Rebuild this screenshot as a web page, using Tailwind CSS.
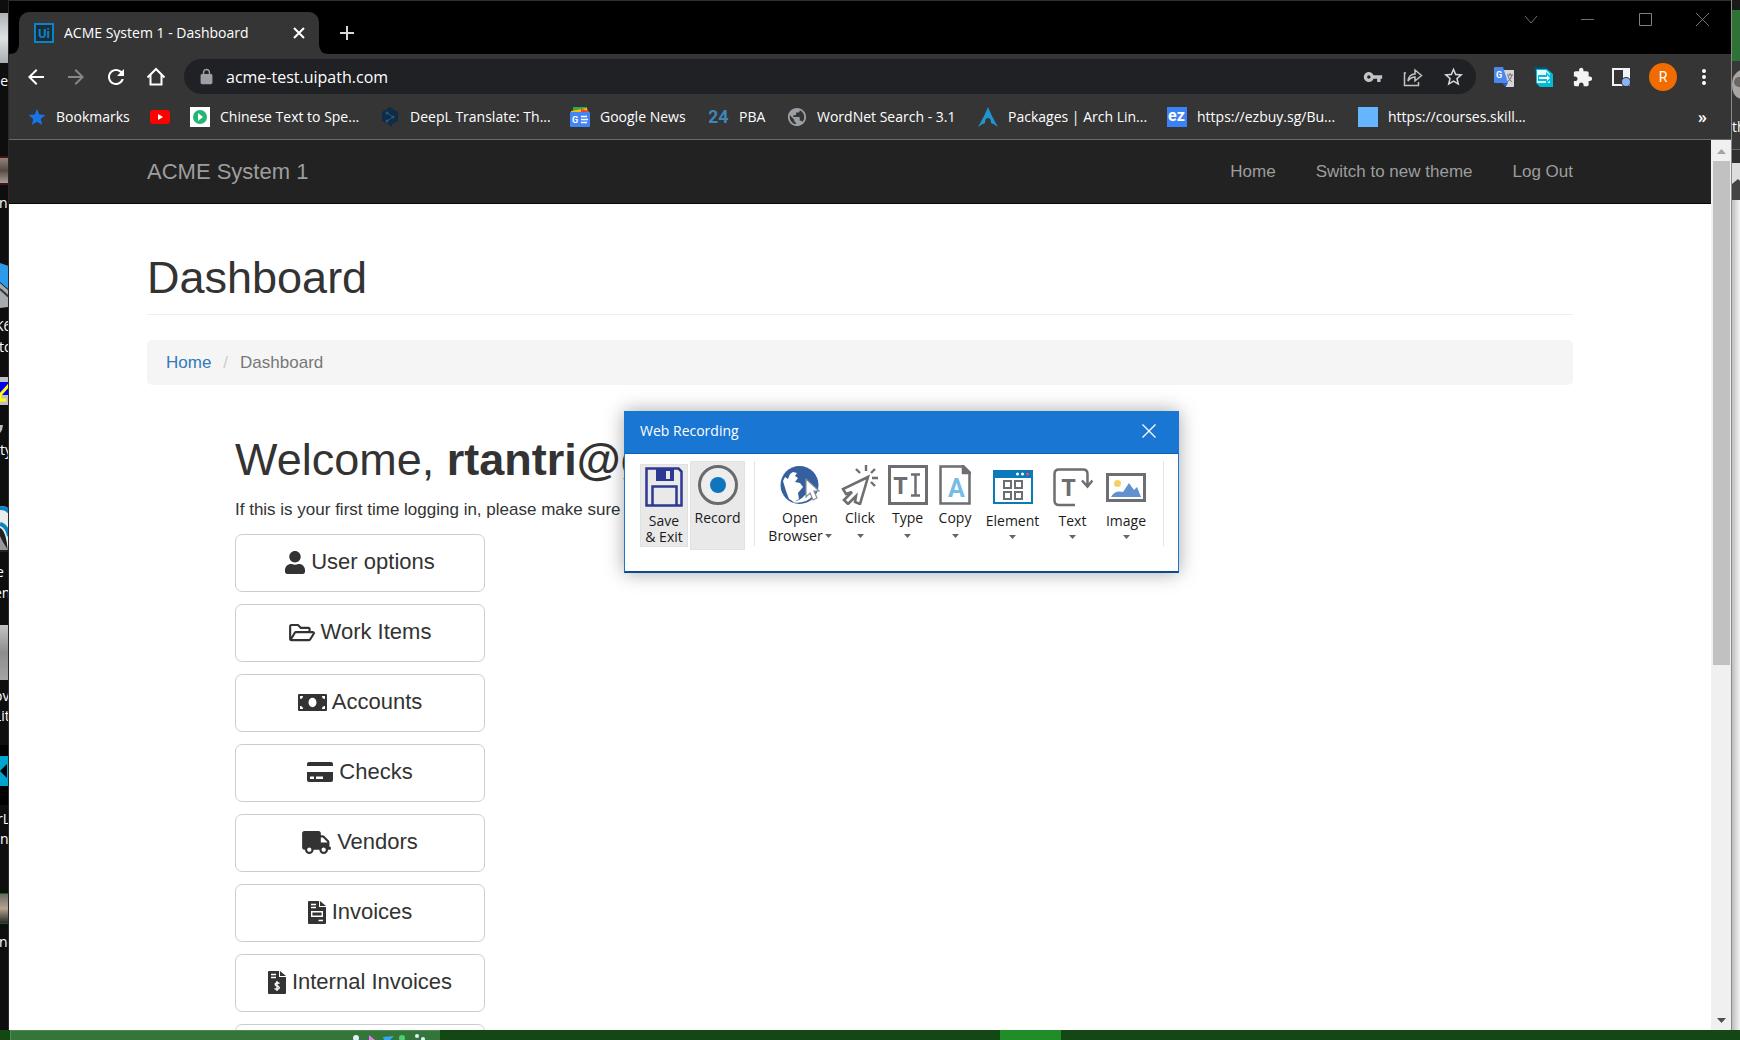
<!DOCTYPE html>
<html lang="en">
<head>
<meta charset="utf-8">
<title>ACME System 1 - Dashboard</title>
<script src="https://cdn.jsdelivr.net/npm/@tailwindcss/browser@4"></script>
</head>
<body class="relative flex h-screen flex-col overflow-hidden bg-[#0e0e0e] font-['Segoe_UI','Open_Sans','Noto_Sans',sans-serif]">

<div class="flex min-h-0 flex-1">

  <!-- desktop, left edge -->
  <aside class="relative w-[9px] shrink-0 overflow-hidden border-r border-[#2a2a2a] bg-[#0e0e0e] text-sm leading-5 whitespace-nowrap text-white">
    <div class="absolute top-[13px] left-0 h-[50px] w-[9px] bg-linear-to-b from-[#aeb2b4] via-[#dfe2e3] to-[#a9adb0]"></div>
    <span class="absolute top-[71px] right-0">e</span>
    <div class="absolute top-[156px] left-0 h-[29px] w-[9px] border-y-2 border-[#4a1212] bg-linear-to-b from-[#8b857c] via-[#5b4a44] to-[#a7a09a]"></div>
    <span class="absolute top-[193px] left-[-1px]">ne</span>
    <svg class="absolute top-[263px] left-0" width="9" height="46"><path d="M0 0l9 3v24L0 19z" fill="#2b9bea"/><path d="M0 20l9 8v16l-9 1z" fill="#a6abb0"/><path d="M0 26l9 8" stroke="#333" stroke-width="2"/></svg>
    <span class="absolute top-[316px] left-[-5px]">K6</span>
    <span class="absolute top-[337px] left-[-1px]">to</span>
    <svg class="absolute top-[377px] left-0" width="9" height="28"><path d="M0 0h9v28H0z" fill="#c0c0c0"/><path d="M0 5h9v13H0z" fill="#0000f0"/><path d="M9 8L0 18v5h6" stroke="#ff0" stroke-width="3" fill="none"/></svg>
    <svg class="absolute top-[425px] left-0" width="9" height="9"><path d="M0 0h3l-1 5-2 3z" fill="#bbb"/></svg>
    <span class="absolute top-[440px] left-[-5px]">tty</span>
    <svg class="absolute top-[506px] left-0" width="9" height="46"><path d="M0 0q8 0 9 4v40H0z" fill="#ececec"/><path d="M0 2q7 0 9 4M0 18q7 2 9 12" stroke="#0a84c4" stroke-width="4" fill="none"/><path d="M0 22q6 2 8 24H0z" fill="#222"/><path d="M0 30l3 6 5 8H0z" fill="#999"/></svg>
    <span class="absolute top-[562px] left-[-4px]">e S</span>
    <span class="absolute top-[583px] left-[-6px]">en</span>
    <div class="absolute top-[625px] left-0 h-[55px] w-[9px] bg-linear-to-b from-[#c4c4c4] via-[#8d8d8d] to-[#a5a5a5]"></div>
    <span class="absolute top-[686px] left-[-6px]">ov</span>
    <span class="absolute top-[706px] left-[-6px]">Lit</span>
    <svg class="absolute top-[745px] left-0" width="9" height="60"><path d="M0 0h9v60H0z" fill="#000"/><path d="M0 11h9v30H0zM0 37h9v2H0z" fill="#00a5cf"/><path d="M7 19v14l-7-7z" fill="#000"/></svg>
    <span class="absolute top-[809px] left-[-3px]">rL</span>
    <span class="absolute top-[829px] left-0">n</span>
    <div class="absolute top-[893px] left-0 h-[31px] w-[9px] border-y border-[#1b5a1f] bg-linear-to-b from-[#6d6a66] via-[#b5a48f] to-[#2b2b2b]"></div>
    <span class="absolute top-[932px] left-[-1px]">ne</span>
  </aside>

  <!-- browser window -->
  <div class="flex min-w-0 flex-1 flex-col">

    <header class="shrink-0 border-b border-[#6a6a6a] bg-[#353535] text-sm text-white">
      <!-- tab strip -->
      <div class="flex h-[54px] items-end border-t border-[#2e2e2e] bg-black">
        <svg width="10" height="10" class="shrink-0"><path d="M10 0v10H0q10 0 10-10z" fill="#353535"/></svg>
        <div class="flex h-[42px] w-[300px] items-center rounded-t-[10px] bg-[#353535] pl-[15px] pr-3">
          <svg width="20" height="20"><rect x="1" y="1" width="18" height="18" fill="#1c2b36" stroke="#0a84c4" stroke-width="2"/><text x="4" y="15" font-family="Roboto" font-size="13" font-weight="700" fill="#0a84c4">Ui</text></svg>
          <span class="ml-[10px] flex-1 whitespace-nowrap">ACME System 1 - Dashboard</span>
          <button aria-label="Close tab"><svg width="16" height="16"><path d="M3 3l10 10M13 3L3 13" stroke="#fff" stroke-width="2"/></svg></button>
        </div>
        <svg width="10" height="10" class="shrink-0"><path d="M0 0v10h10Q0 10 0 0z" fill="#353535"/></svg>
        <button aria-label="New tab" class="mb-[11px] ml-2"><svg width="20" height="20"><path d="M10 3v14M3 10h14" stroke="#d8d8d8" stroke-width="2"/></svg></button>
        <div class="ml-auto flex gap-[37px] self-start pt-[8px] pr-[19px]">
          <button aria-label="Tab search"><svg width="20" height="20" fill="none" stroke="#707070"><path d="M4 7l6 7 6-7"/></svg></button>
          <button aria-label="Minimize"><svg width="20" height="20" fill="none" stroke="#707070"><path d="M3 10.500h13"/></svg></button>
          <button aria-label="Maximize"><svg width="20" height="20" fill="none" stroke="#808080"><path d="M4.500 4.500h12v12h-12z"/></svg></button>
          <button aria-label="Close window"><svg width="20" height="20" fill="none" stroke="#707070"><path d="M4 4l13 13M17 4L4 17"/></svg></button>
        </div>
      </div>

      <!-- toolbar -->
      <div class="flex h-[45px] items-center pl-[15px]">
        <nav class="flex gap-4">
          <button aria-label="Back"><svg width="24" height="24" viewBox="0 0 24 24" fill="#fff"><path d="M20 11H7.830l5.590-5.590L12 4l-8 8 8 8 1.410-1.410L7.830 13H20v-2z"/></svg></button>
          <button aria-label="Forward"><svg width="24" height="24" viewBox="0 0 24 24" fill="#868686"><path d="M4 11h12.170l-5.590-5.590L12 4l8 8-8 8-1.410-1.410L16.170 13H4v-2z"/></svg></button>
          <button aria-label="Reload"><svg width="24" height="24" viewBox="0 0 24 24" fill="#fff"><path d="M17.650 6.350C16.200 4.900 14.210 4 12 4c-4.420 0-7.990 3.580-7.990 8s3.570 8 7.990 8c3.730 0 6.840-2.550 7.730-6h-2.080c-.82 2.330-3.040 4-5.650 4-3.310 0-6-2.690-6-6s2.690-6 6-6c1.660 0 3.140.69 4.220 1.780L13 11h7V4l-2.350 2.350z"/></svg></button>
          <button aria-label="Home page"><svg width="24" height="24" viewBox="0 0 24 24" fill="none" stroke="#fff" stroke-width="2"><path d="M6.500 10v9.500h11V10M3.500 12.500L12 4l8.500 8.500"/></svg></button>
        </nav>
        <div class="ml-4 flex h-[35px] flex-1 items-center rounded-full bg-[#202124] pl-[15px] pr-3">
          <svg width="15" height="17" viewBox="3 0 18 23" fill="#9aa0a6"><path d="M18 8h-1V6c0-2.760-2.240-5-5-5S7 3.240 7 6v2H6c-1.100 0-2 .9-2 2v10c0 1.100.9 2 2 2h12c1.100 0 2-.9 2-2V10c0-1.100-.9-2-2-2zM9 6c0-1.660 1.340-3 3-3s3 1.340 3 3v2H9V6z"/></svg>
          <input aria-label="Address" value="acme-test.uipath.com" class="ml-3 min-w-0 flex-1 bg-transparent text-base text-white outline-none">
          <div class="flex gap-5">
            <button aria-label="Passwords"><svg width="20" height="20" viewBox="0 0 24 24" fill="#c4c4c4"><path d="M12.650 10C11.830 7.670 9.610 6 7 6c-3.310 0-6 2.690-6 6s2.690 6 6 6c2.610 0 4.830-1.670 5.650-4H17v4h4v-4h2v-4H12.650zM7 14c-1.100 0-2-.9-2-2s.9-2 2-2 2 .9 2 2-.9 2-2 2z"/></svg></button>
            <button aria-label="Share"><svg width="20" height="20" fill="none" stroke="#c4c4c4" stroke-width="1.500"><path d="M3 6H1.500v12.500h14V15"/><path d="M5 14q1-7 7-7V3l6.500 5.500L12 14v-4q-4 0-7 4z"/></svg></button>
            <button aria-label="Bookmark this page"><svg width="21" height="21" viewBox="1 1 22 21" fill="#d8d8d8"><path d="M22 9.240l-7.190-.62L12 2 9.190 8.630 2 9.240l5.460 4.730L5.820 21 12 17.270 18.180 21l-1.630-7.030L22 9.240zM12 15.400l-3.760 2.270 1-4.280-3.320-2.880 4.380-.38L12 6.100l1.710 4.040 4.380.38-3.320 2.880 1 4.280L12 15.400z"/></svg></button>
          </div>
        </div>
        <div class="flex items-center gap-[18px] pr-[17px] pl-[17px]">
          <button aria-label="Translate"><svg width="22" height="22"><path d="M10 4h11v16q0 1-1 1h-7z" fill="#d4d6d9"/><path d="M1 2q0-1 1-1h8l5 16H2q-1 0-1-1z" fill="#4a88ee"/><path d="M9 17h6l-2.500 4z" fill="#2f56c8"/><text x="3" y="12" font-family="Roboto" font-size="9" font-weight="700" fill="#fff">G</text><path d="M14 9h6M17 7v2M19 9q-1 5-5 7M15 10q1 4 4 6" stroke="#6d7378" fill="none"/></svg></button>
          <button aria-label="Screen sharing extension"><svg width="22" height="22"><path d="M1 1h12l2 2v12H4z" fill="#075177"/><path d="M3 3h11l6 5v13H7l-4-4z" fill="#00bcd9"/><path d="M4 4h9l4 4v9H4z" fill="#e6fafc"/><path d="M5 9h8V6l7 6-7 6v-3H5z" fill="#00bcd9"/><path d="M6 11h8V9l3 3-3 3v-2H6z" fill="#fff"/></svg></button>
          <button aria-label="Extensions"><svg width="20" height="20" viewBox="1 0 23 23" fill="#f3f3f3"><path d="M20.500 11H19V7c0-1.100-.9-2-2-2h-4V3.500C13 2.120 11.880 1 10.500 1S8 2.120 8 3.500V5H4c-1.100 0-1.990.9-1.990 2v3.800H3.500c1.490 0 2.700 1.210 2.700 2.700s-1.210 2.700-2.700 2.700H2V20c0 1.100.9 2 2 2h3.800v-1.500c0-1.490 1.210-2.700 2.700-2.700 1.490 0 2.700 1.210 2.700 2.700V22H17c1.100 0 2-.9 2-2v-4h1.500c1.380 0 2.500-1.120 2.500-2.500S21.880 11 20.500 11z"/></svg></button>
          <button aria-label="Side panel"><svg width="20" height="20"><path d="M2 2h16v16H2z" fill="none" stroke="#f3f3f3" stroke-width="2"/><path d="M12 2h6v9h-6z" fill="#f3f3f3"/><circle cx="15" cy="15" r="5" fill="#353535"/><circle cx="15" cy="15" r="4" fill="#8ab4f8"/></svg></button>
          <button aria-label="Profile" class="-mr-px flex size-7 items-center justify-center rounded-full bg-[#f06c00] font-['Roboto',sans-serif] text-sm">R</button>
          <button aria-label="Menu"><svg width="20" height="20" fill="#fff"><circle cx="10" cy="4" r="2"/><circle cx="10" cy="10" r="2"/><circle cx="10" cy="16" r="2"/></svg></button>
        </div>
      </div>

      <!-- bookmarks bar -->
      <nav class="flex h-[40px] items-center pb-1 pl-[18px] whitespace-nowrap">
        <a href="#" class="flex w-[123px] shrink-0 items-center gap-[9px]"><svg width="20" height="20" viewBox="0 0 24 23" fill="#1a73e8"><path d="M22 9.240l-7.190-.62L12 2 9.190 8.630 2 9.240l5.460 4.730L5.820 21 12 17.270 18.180 21l-1.630-7.030z"/></svg>Bookmarks</a>
        <a href="#" aria-label="YouTube" class="flex w-[40px] shrink-0 items-center"><svg width="20" height="20"><rect y="3" width="20" height="14" rx="3" fill="#f00"/><path d="M8 7v6l5-3z" fill="#fff"/></svg></a>
        <a href="#" class="flex w-[190px] shrink-0 items-center gap-[10px]"><svg width="20" height="20"><path d="M0 0h20v20H0z" fill="#fff"/><circle cx="10" cy="10" r="7" fill="#22b573"/><path d="M8 6v8l5-4z" fill="#fff"/></svg>Chinese Text to Spe...</a>
        <a href="#" class="flex w-[190px] shrink-0 items-center gap-[10px]"><svg width="20" height="20"><path d="M10 0l8 5v9l-6 3v3l-4-3-6-3V5z" fill="#0f2b46"/><path d="M7 6l6 4-6 4" fill="none" stroke="#2d5779" stroke-width="1"/><circle cx="7" cy="6" r="1.500" fill="#2d5779"/><circle cx="13" cy="10" r="1.500" fill="#2d5779"/><circle cx="7" cy="14" r="1.500" fill="#2d5779"/></svg>DeepL Translate: Th...</a>
        <a href="#" class="flex w-[139px] shrink-0 items-center gap-[10px]"><svg width="20" height="20"><path d="M3 0h14v5H3z" fill="#34a853"/><path d="M1 4l16-3 1 5H1z" fill="#fbbc04"/><path d="M11 2l8 2v3h-8z" fill="#ea4335"/><rect y="5" width="20" height="15" rx="1" fill="#4285f4"/><text x="2" y="16" font-family="Roboto" font-size="9" font-weight="700" fill="#fff">G</text><path d="M11 9.500h6M11 12.500h7M11 15.500h6" stroke="#fff" stroke-width="1.500"/></svg>Google News</a>
        <a href="#" class="flex w-[78px] shrink-0 items-center gap-[10px]"><svg width="20" height="20"><text x="-1" y="16" font-family="Roboto" font-size="18" font-weight="700" fill="#3e86b8">24</text></svg>PBA</a>
        <a href="#" class="flex w-[191px] shrink-0 items-center gap-[10px]"><svg width="20" height="20" viewBox="1 1 22 22" fill="#9aa0a6"><path d="M12 2C6.480 2 2 6.480 2 12s4.480 10 10 10 10-4.480 10-10S17.520 2 12 2zm-1 17.930c-3.950-.49-7-3.850-7-7.930 0-.62.08-1.210.21-1.790L9 15v1c0 1.100.9 2 2 2v1.930zm6.900-2.540c-.26-.81-1-1.390-1.900-1.390h-1v-3c0-.55-.45-1-1-1H8v-2h2c.55 0 1-.45 1-1V7h2c1.100 0 2-.9 2-2v-.41c2.930 1.190 5 4.060 5 7.410 0 2.080-.8 3.970-2.100 5.390z"/></svg>WordNet Search - 3.1</a>
        <a href="#" class="flex w-[189px] shrink-0 items-center gap-[10px]"><svg width="20" height="20"><path d="M10 0q3 8 10 20-4-3-7-4 0-5-3-5t-3 5q-3 1-7 4Q7 8 10 0z" fill="#1e96d2"/></svg>Packages | Arch Lin...</a>
        <a href="#" class="flex w-[191px] shrink-0 items-center gap-[10px]"><svg width="20" height="20"><path d="M0 0h20v20H0z" fill="#3b82f6"/><text x="1" y="14" font-family="Roboto" font-size="16" font-weight="700" fill="#fff">ez</text></svg>https://ezbuy.sg/Bu...</a>
        <a href="#" class="flex shrink-0 items-center gap-[10px]"><span class="size-5 bg-[#66b5ff]"></span>https://courses.skill...</a>
        <button aria-label="More bookmarks" class="mr-[24px] ml-auto text-base leading-none font-semibold">»</button>
      </nav>
    </header>

    <div class="flex min-h-0 flex-1 font-['Arial','Liberation_Sans',sans-serif] text-[17px] leading-[25px] text-[#333]">
      <!-- page -->
      <main class="min-w-0 flex-1 overflow-hidden bg-white">
        <nav class="flex h-[64px] items-center justify-between border-b border-[#080808] bg-[#222] px-[138px] pb-px text-[#9d9d9d]">
          <a href="#" class="text-[22px]">ACME System 1</a>
          <div class="flex gap-10">
            <a href="#">Home</a>
            <a href="#">Switch to new theme</a>
            <a href="#">Log Out</a>
          </div>
        </nav>
        <div class="px-[138px] pt-[49px]">
          <h1 class="border-b border-[#eee] pb-[11px] text-[45px] leading-[50px]">Dashboard</h1>
          <ol class="mt-[25px] flex h-[45px] items-center rounded-[5px] bg-[#f5f5f5] px-[19px] text-[#777]">
            <li><a href="#" class="text-[#337ab7]">Home</a></li>
            <li class="px-3 text-[#ccc]" aria-hidden="true">/</li>
            <li>Dashboard</li>
          </ol>
          <section class="pt-[50px] pl-[88px]">
            <h2 class="text-[45px] leading-[50px] whitespace-nowrap">Welcome, <strong>rtantri@gmail.com</strong></h2>
            <p class="mt-3 whitespace-nowrap">If this is your first time logging in, please make sure</p>
            <div class="mt-3 flex w-[250px] flex-col gap-3 text-[22px] leading-[30px]">
              <button class="flex h-[58px] shrink-0 items-center justify-center gap-[6px] rounded-[7px] border border-[#ccc] pb-[2px]"><svg width="20" height="23" viewBox="0 0 448 512" fill="#333"><path d="M224 256c70.700 0 128-57.300 128-128S294.700 0 224 0 96 57.300 96 128s57.300 128 128 128zm89.600 32h-16.700c-22.200 10.200-46.900 16-72.900 16s-50.600-5.800-72.900-16h-16.700C60.200 288 0 348.200 0 422.400V464c0 26.500 21.500 48 48 48h352c26.500 0 48-21.500 48-48v-41.600c0-74.200-60.200-134.400-134.400-134.400z"/></svg>User options</button>
              <button class="flex h-[58px] shrink-0 items-center justify-center gap-[6px] rounded-[7px] border border-[#ccc] pb-[2px]"><svg width="26" height="23" viewBox="0 0 576 512" fill="#333"><path d="M527.900 224H480v-48c0-26.500-21.500-48-48-48H272l-64-64H48C21.500 64 0 85.500 0 112v288c0 26.500 21.500 48 48 48h400c16.500 0 31.900-8.500 40.700-22.600l79.900-128c20-31.900-3-73.400-40.700-73.400zM48 118c0-3.300 2.700-6 6-6h134.100l64 64H426c3.300 0 6 2.700 6 6v42H152c-16.800 0-32.400 8.800-41.100 23.200L48 351.400zm400 282H72l77.200-128H528z"/></svg>Work Items</button>
              <button class="flex h-[58px] shrink-0 items-center justify-center gap-[5px] rounded-[7px] border border-[#ccc] pb-[2px]"><svg width="29" height="23" viewBox="0 0 29 23"><rect y="3" width="29" height="17" rx="1" fill="#333"/><ellipse cx="14.500" cy="11.500" rx="4" ry="4.700" fill="#fff"/><path d="M2 8V5h3q0 3-3 3zM27 8V5h-3q0 3 3 3zM2 15v3h3q0-3-3-3zM27 15v3h-3q0-3 3-3z" fill="#fff"/></svg>Accounts</button>
              <button class="flex h-[58px] shrink-0 items-center justify-center gap-[6px] rounded-[7px] border border-[#ccc] pb-[2px]"><svg width="26" height="23" viewBox="0 0 26 23" fill="#333"><path d="M0 5V3q0-2 2-2h22q2 0 2 2v2zM0 11h26v8q0 2-2 2H2q-2 0-2-2z"/><path d="M3 15.500h4v2.500H3zM9 15.500h7v2.500H9z" fill="#fff"/></svg>Checks</button>
              <button class="flex h-[58px] shrink-0 items-center justify-center gap-[6px] rounded-[7px] border border-[#ccc] pb-[2px]"><svg width="29" height="23" viewBox="0 0 640 512" fill="#333"><path d="M624 352h-16V243.900c0-12.700-5.100-24.900-14.100-33.900L494 110.100c-9-9-21.200-14.100-33.900-14.100H416V48c0-26.500-21.500-48-48-48H48C21.500 0 0 21.500 0 48v320c0 26.500 21.500 48 48 48h16c0 53 43 96 96 96s96-43 96-96h128c0 53 43 96 96 96s96-43 96-96h48c8.800 0 16-7.200 16-16v-32c0-8.800-7.200-16-16-16zM160 464c-26.500 0-48-21.500-48-48s21.500-48 48-48 48 21.500 48 48-21.500 48-48 48zm320 0c-26.500 0-48-21.500-48-48s21.500-48 48-48 48 21.500 48 48-21.500 48-48 48zm80-208H416V144h44.100l99.900 99.900V256z"/></svg>Vendors</button>
              <button class="flex h-[58px] shrink-0 items-center justify-center gap-[6px] rounded-[7px] border border-[#ccc] pb-[2px]"><svg width="18" height="23" viewBox="0 0 18 23" fill="#333"><path d="M1 0h10v6h7v16q0 1-1 1H1q-1 0-1-1V1q0-1 1-1zM12 0l6 5h-6z"/><path d="M3 3.500h5M3 6.500h5M10.500 19.500h4.500" stroke="#fff" stroke-width="1.300"/><path d="M3.700 10.700h10.600v4.600H3.700z" fill="#333" stroke="#fff" stroke-width="1.400"/></svg>Invoices</button>
              <button class="flex h-[58px] shrink-0 items-center justify-center gap-[6px] rounded-[7px] border border-[#ccc] pb-[2px]"><svg width="18" height="23" viewBox="0 0 18 23" fill="#333"><path d="M1 0h10v6h7v16q0 1-1 1H1q-1 0-1-1V1q0-1 1-1zM12 0l6 5h-6z"/><path d="M3 3.500h5M3 6.500h5" stroke="#fff" stroke-width="1.300"/><path d="M11.500 12.500q-2-1.500-4 0-1 1.500 1.500 2.500 3 1 2 2.500-2 1.500-4.500 0M9 10v10" stroke="#fff" stroke-width="1.400" fill="none"/></svg>Internal Invoices</button>
              <button class="h-[58px] shrink-0 rounded-[7px] border border-[#ccc]" aria-label="Search"></button>
            </div>
          </section>
        </div>
      </main>
      <!-- scrollbar -->
      <div class="flex w-5 shrink-0 flex-col items-center bg-[#f0f0f0]">
        <svg width="20" height="21" fill="#a3a3a3"><path d="M6 14h9l-4.500-5z"/></svg>
        <div class="ml-px h-[504px] w-[17px] bg-[#c1c1c1]"></div>
        <svg width="20" height="20" class="mt-auto" fill="#505050"><path d="M6 8h9l-4.500 5z"/></svg>
      </div>
    </div>
  </div>

  <!-- window behind, right edge -->
  <aside class="relative flex w-[9px] shrink-0 flex-col overflow-hidden border-l border-[#8a8a8a] bg-white text-sm text-white">
    <div class="h-[10px] bg-[#1a1a1a]"></div>
    <div class="h-[51px] bg-[#2e7235]"></div>
    <div class="h-[88px] bg-[#383838]"><svg width="9" height="56"><path d="M9 9Q0 12 0 24t9 14z" fill="#a8a5a2"/><circle cx="7" cy="21" r="5" fill="#6a6765"/></svg><span class="block leading-5">th</span></div>
    <div class="h-[14px] border-t border-[#666] bg-[#303030]"></div>
    <div class="h-[37px] bg-[#ddd]"><svg width="9" height="37"><path d="M0 21l6-5 3 3v18H0z" fill="#444"/></svg></div>
    <div class="flex-1 bg-linear-to-r from-[#bdbdbd] to-[#f4f4f4]"></div>
  </aside>
</div>

<!-- taskbar -->
<footer class="flex h-[10px] shrink-0 overflow-hidden bg-[#134815]">
  <div class="ml-[10px] w-[430px] border-t border-l border-[#4f8a53] bg-[#347639]">
    <svg width="430" height="9"><circle cx="345" cy="7" r="3" fill="#dfefff"/><path d="M358 4l6 5h-6z" fill="#e67af0"/><path d="M372 6l11-1-4 4h-6z" fill="#34a8f5"/><circle cx="391" cy="7" r="3" fill="#48d070"/><circle cx="406" cy="5" r="2" fill="#dfefff"/><circle cx="412" cy="8" r="2" fill="#dfefff"/></svg>
  </div>
  <div class="ml-[560px] w-[61px] bg-[#208d28]"></div>
</footer>

<!-- floating recorder window -->
<section aria-label="Web Recording" class="absolute top-[411px] left-[624px] flex h-[162px] w-[555px] flex-col border border-b-2 border-[#1976d2] border-b-[#0c4b8c] bg-white text-sm text-[#1a1a1a] shadow-[0_0_18px_rgba(0,0,0,0.35)]">
  <header class="flex h-[42px] shrink-0 items-center justify-between border-b border-[#0f5fb3] bg-[#1976d2] pr-[21px] pb-[3px] pl-[15px] text-white">
    <h2>Web Recording</h2>
    <button aria-label="Close recorder"><svg width="16" height="16"><path d="M1.500 1.500l13 13M14.500 1.500l-13 13" stroke="#fff" stroke-width="1.300"/></svg></button>
  </header>
  <div class="flex items-start pt-[7px] pl-[15px] leading-[18px]">
    <button class="mt-[3px] flex h-[83px] w-12 shrink-0 flex-col items-center border border-[#e0e0e0] bg-[#e9e9e9] pt-[2px] leading-4">
      <svg width="38" height="40" fill="none" stroke="#2b3990" stroke-width="2.500"><path d="M1.500 1.500h32l3 3v34h-35z"/><path d="M7.500 38V19.500h24V38" /><path d="M11 1h18v13H11z" fill="#2b3990" stroke="none"/><path d="M21 4h4v8h-4z" fill="#e9e9e9" stroke="none"/></svg>
      <span class="mt-[6px]">Save<br><span class="whitespace-nowrap">&amp; Exit</span></span>
    </button>
    <button class="ml-[2px] flex h-[89px] w-[55px] shrink-0 flex-col items-center border border-[#e2e2e2] bg-[#e9e9e9] pt-[3px]">
      <svg width="40" height="40"><circle cx="20" cy="20" r="18.500" fill="#ededed" stroke="#696a6c" stroke-width="3"/><circle cx="20" cy="20" r="8" fill="#0f75bd"/></svg>
      <span class="mt-1">Record</span>
    </button>
    <div class="ml-[9px] h-[85px] w-px bg-[#e4e4e4]"></div>
    <button class="ml-[11px] flex w-[68px] shrink-0 flex-col items-center pt-1">
      <svg width="40" height="40"><circle cx="19.500" cy="20" r="19" fill="#355f9e"/><path d="M3 16l2-4 3 2 2-5 3-2 4 1-2 3 3 2-3 4 5 1 3 4-5 6 1 6-5 3-5-3-3-8zM25 30q6-2 11-5-2 7-10 11-8 3-14 1 8-1 13-7z" fill="#fff"/><path d="M26 14v18l4-4 3 7 4-2-3-7h5z" fill="#fff" stroke="#8b8d90" stroke-width="1.200"/></svg>
      <span class="mt-1">Open</span>
      <span class="flex items-center gap-0.5">Browser<svg width="7" height="4" fill="#666"><path d="M0 0h7L3.500 4z"/></svg></span>
    </button>
    <button class="flex w-[52px] shrink-0 flex-col items-center pt-1">
      <svg width="40" height="40" fill="none" stroke="#6d6e71" stroke-width="3"><path d="M28 12L3 24l3 5 6-2-8 8 4 4 8-8-1 6 5 2z" stroke-width="2.600"/><path d="M26 0v6M35 4l-4 4M38 13h-6M31 17l4 4M16 4l4 4" stroke-width="2.400"/></svg>
      <span class="mt-1">Click</span>
      <svg class="mt-[7px]" width="7" height="4" fill="#666"><path d="M0 0h7L3.500 4z"/></svg>
    </button>
    <button class="flex w-[43px] shrink-0 flex-col items-center pt-1">
      <svg width="40" height="40" fill="none" stroke="#6d6e71" stroke-width="3"><path d="M1.500 1.500h37v37h-37z"/><text x="5" y="29" font-family="Liberation Mono" font-size="25" font-weight="700" fill="#6d6e71" stroke="none">T</text><path d="M23 9.500h9M23 30.500h9M27.500 9v21" stroke-width="2.500"/></svg>
      <span class="mt-1">Type</span>
      <svg class="mt-[7px]" width="7" height="4" fill="#666"><path d="M0 0h7L3.500 4z"/></svg>
    </button>
    <button class="flex w-[52px] shrink-0 flex-col items-center pt-1">
      <svg width="32" height="40" fill="none" stroke="#6d6e71" stroke-width="2.500"><path d="M1.500 1.500h23l6 6v31h-29z"/><path d="M24 1v7h7z" fill="#6d6e71"/><text x="9" y="32" font-family="Roboto" font-size="25" font-weight="700" fill="#77bce5" stroke="none">A</text></svg>
      <span class="mt-1">Copy</span>
      <svg class="mt-[7px]" width="7" height="4" fill="#666"><path d="M0 0h7L3.500 4z"/></svg>
    </button>
    <button class="flex w-[63px] shrink-0 flex-col items-center pt-[7px]">
      <svg width="40" height="40" fill="none" stroke="#6d6e71" stroke-width="2"><rect x="1" y="3" width="38" height="32" fill="#fff" stroke="#0c79b8"/><path d="M0 2h40v8H0z" fill="#0c79b8" stroke="none"/><circle cx="24.500" cy="6" r="1.500" fill="#fff" stroke="none"/><circle cx="29.500" cy="6" r="1.500" fill="#fff" stroke="none"/><circle cx="34.500" cy="6" r="1.500" fill="#ff4b55" stroke="none"/><path d="M11 13h7v7h-7zM22 13h7v7h-7zM11 24h7v7h-7zM22 24h7v7h-7z"/></svg>
      <span class="mt-1">Element</span>
      <svg class="mt-[5px]" width="7" height="4" fill="#666"><path d="M0 0h7L3.500 4z"/></svg>
    </button>
    <button class="flex w-[57px] shrink-0 flex-col items-center pt-[7px]">
      <svg width="40" height="40" fill="none" stroke="#6d6e71" stroke-width="2.500"><path d="M22 37H6q-4.500 0-4.500-4.500V6q0-4.500 4.500-4.500h24q4.500 0 4.500 4.500v12M29 12.500l5.500 6 5-6"/><text x="8" y="28" font-family="Liberation Mono" font-size="25" font-weight="700" fill="#6d6e71" stroke="none">T</text></svg>
      <span class="mt-1">Text</span>
      <svg class="mt-[5px]" width="7" height="4" fill="#666"><path d="M0 0h7L3.500 4z"/></svg>
    </button>
    <button class="flex w-[50px] shrink-0 flex-col items-center pt-[7px]">
      <svg width="40" height="40"><rect x="1.500" y="6.500" width="37" height="26" fill="#fff" stroke="#6d6e71" stroke-width="3"/><circle cx="11.500" cy="15.500" r="3.500" fill="#f0d264"/><path d="M5 29q4-7 12-5l6-9 5 7 3-3 4 10z" fill="#6192cf"/></svg>
      <span class="mt-1">Image</span>
      <svg class="mt-[5px]" width="7" height="4" fill="#666"><path d="M0 0h7L3.500 4z"/></svg>
    </button>
    <div class="ml-[12px] h-[85px] w-px bg-[#e4e4e4]"></div>
  </div>
</section>
</body>
</html>
